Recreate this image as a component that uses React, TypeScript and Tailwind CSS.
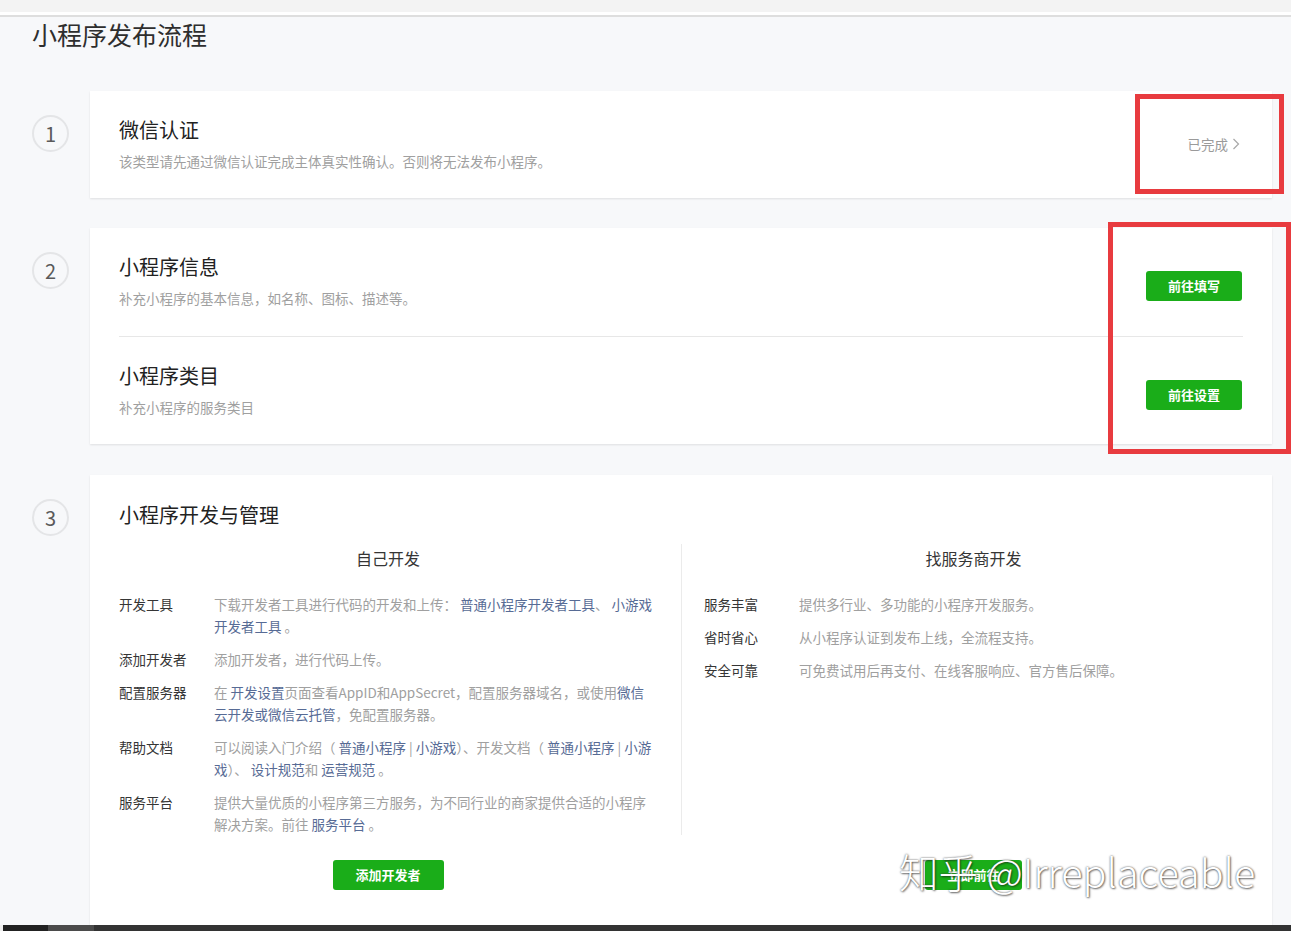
import type { ReactNode } from "react";

const link = "text-[#576b95]";

function A({ children }: { children: ReactNode }) {
  return <span className={link}>{children}</span>;
}

function StepCircle({ n }: { n: number }) {
  return (
    <div className="flex w-[90px] shrink-0 pl-[32px] pt-[24px]">
      <div className="flex h-[37px] w-[37px] items-center justify-center rounded-full border-2 border-[#e4e5e7] text-[20px] leading-none text-[#5a5a5a]">
        {n}
      </div>
    </div>
  );
}

function GreenButton({ children, className = "" }: { children: ReactNode; className?: string }) {
  return (
    <button
      type="button"
      className={`h-[30px] rounded-[3px] bg-[#1aad19] text-[13px] font-bold text-white ${className}`}
    >
      {children}
    </button>
  );
}

function InfoRow({ label, children }: { label: string; children: ReactNode }) {
  return (
    <div className="flex text-[13.5px] leading-[22px]">
      <div className="w-[95px] shrink-0 text-[#353535]">{label}</div>
      <div className="w-[445px] text-[#a0a0a0]">{children}</div>
    </div>
  );
}

export default function App() {
  return (
    <div className="relative h-[931px] w-full overflow-hidden bg-[#f7f8fa] font-['Noto_Sans_CJK_SC','Liberation_Sans',sans-serif]">
      <div className="h-[12px] bg-[#f3f3f3]" />
      <div className="h-[3px] bg-white" />
      <div className="h-[2px] bg-[#dedede]" />

      <h1 className="pl-[32px] text-[25px] leading-[34px] font-normal text-[#2e2e2e]">小程序发布流程</h1>

      {/* step 1 */}
      <div className="mt-[40px] flex">
        <StepCircle n={1} />
        <section className="flex h-[107px] w-[1182px] items-start justify-between bg-white px-[29px] pt-[25px] shadow-[0_1px_2px_rgba(0,0,0,0.1)]">
          <div>
            <h2 className="text-[20px] leading-[28px] text-[#222]">微信认证</h2>
            <p className="mt-[7px] text-[13.5px] leading-[20px] text-[#a0a0a0]">
              该类型请先通过微信认证完成主体真实性确认。否则将无法发布小程序。
            </p>
          </div>
          <div className="mt-[18px] mr-[3px] flex items-center gap-[4px] text-[13.5px] leading-[20px] text-[#9a9a9a]">
            已完成
            <svg width="8" height="12" viewBox="0 0 8 12" fill="none" stroke="#a8a8a8" strokeWidth="1.2">
              <path d="M1.5 1 L6.5 6 L1.5 11" />
            </svg>
          </div>
        </section>
      </div>

      {/* step 2 */}
      <div className="mt-[30px] flex">
        <StepCircle n={2} />
        <section className="w-[1182px] bg-white px-[29px] shadow-[0_1px_2px_rgba(0,0,0,0.1)]">
          <div className="flex items-start justify-between pt-[25px] pb-[28px]">
            <div>
              <h2 className="text-[20px] leading-[28px] text-[#222]">小程序信息</h2>
              <p className="mt-[7px] text-[13.5px] leading-[20px] text-[#a0a0a0]">补充小程序的基本信息，如名称、图标、描述等。</p>
            </div>
            <GreenButton className="mt-[18px] mr-[1px] w-[96px]">前往填写</GreenButton>
          </div>
          <div className="h-px bg-[#e7e7e7]" />
          <div className="flex items-start justify-between pt-[25px] pb-[27px]">
            <div>
              <h2 className="text-[20px] leading-[28px] text-[#222]">小程序类目</h2>
              <p className="mt-[7px] text-[13.5px] leading-[20px] text-[#a0a0a0]">补充小程序的服务类目</p>
            </div>
            <GreenButton className="mt-[18px] mr-[1px] w-[96px]">前往设置</GreenButton>
          </div>
        </section>
      </div>

      {/* step 3 */}
      <div className="mt-[31px] flex">
        <StepCircle n={3} />
        <section className="w-[1182px] bg-white px-[29px] pt-[26px] pb-[40px] shadow-[0_1px_2px_rgba(0,0,0,0.1)]">
          <h2 className="text-[20px] leading-[28px] text-[#222]">小程序开发与管理</h2>

          <div className="mt-[15px] flex">
            <div className="w-[538px] shrink-0 pt-[2px]">
              <h3 className="text-center text-[16px] leading-[24px] text-[#353535]">自己开发</h3>
              <div className="mt-[23px] flex flex-col gap-[11px]">
                <InfoRow label="开发工具">
                  下载开发者工具进行代码的开发和上传： <A>普通小程序开发者工具</A>、 <A>小游戏开发者工具</A> 。
                </InfoRow>
                <InfoRow label="添加开发者">添加开发者，进行代码上传。</InfoRow>
                <InfoRow label="配置服务器">
                  在 <A>开发设置</A>页面查看AppID和AppSecret，配置服务器域名，或使用<A>微信云开发或微信云托管</A>，免配置服务器。
                </InfoRow>
                <InfoRow label="帮助文档">
                  可以阅读入门介绍（ <A>普通小程序</A> | <A>小游戏</A>）、开发文档（ <A>普通小程序</A> | <A>小游戏</A>）、 <A>设计规范</A>和 <A>运营规范</A> 。
                </InfoRow>
                <InfoRow label="服务平台">
                  提供大量优质的小程序第三方服务，为不同行业的商家提供合适的小程序解决方案。前往 <A>服务平台</A> 。
                </InfoRow>
              </div>
            </div>
            <div className="ml-[24px] w-px shrink-0 bg-[#ebebeb]" />
            <div className="w-[561px] shrink-0 pl-[22px] pt-[2px]">
              <h3 className="text-center text-[16px] leading-[24px] text-[#353535]">找服务商开发</h3>
              <div className="mt-[23px] flex flex-col gap-[11px]">
                <InfoRow label="服务丰富">提供多行业、多功能的小程序开发服务。</InfoRow>
                <InfoRow label="省时省心">从小程序认证到发布上线，全流程支持。</InfoRow>
                <InfoRow label="安全可靠">可免费试用后再支付、在线客服响应、官方售后保障。</InfoRow>
              </div>
            </div>
          </div>

          <div className="mt-[25px] flex">
            <div className="flex w-[538px] justify-center">
              <GreenButton className="w-[111px]">添加开发者</GreenButton>
            </div>
            <div className="ml-[47px] flex w-[539px] justify-center">
              <GreenButton className="w-[97px]">立即前往</GreenButton>
            </div>
          </div>
        </section>
      </div>

      {/* annotation boxes */}
      <div className="absolute left-[1135px] top-[94px] h-[100px] w-[149px] border-[5px] border-[#e83b3f]" />
      <div className="absolute left-[1108px] top-[222px] h-[232px] w-[183px] border-[5px] border-[#e83b3f]" />

      {/* watermark */}
      <div className="absolute left-[899px] top-[846px] whitespace-nowrap text-[39.5px] font-light leading-[50px] text-white [text-shadow:0_0_2px_rgba(60,60,60,0.9),1px_1px_2px_rgba(0,0,0,0.5)]">
        知乎 @Irreplaceable
      </div>

      {/* bottom strip */}
      <div className="absolute bottom-0 left-0 flex h-[6px] w-full">
        <div className="w-[3px] bg-[#eeeeee]" />
        <div className="w-[45px] bg-[#222]" />
        <div className="w-[46px] bg-[#4b4b4b]" />
        <div className="flex-1 bg-[#333]" />
      </div>
    </div>
  );
}
